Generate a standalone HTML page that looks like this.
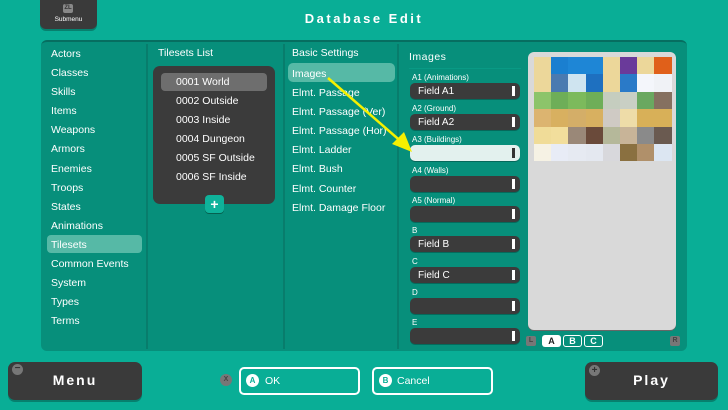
<!DOCTYPE html>
<html><head><meta charset="utf-8"><style>
*{margin:0;padding:0;box-sizing:border-box}
body{width:728px;height:410px;background:#09ae96;font-family:"Liberation Sans","DejaVu Sans",sans-serif;color:#fff;position:relative;overflow:hidden}
.a{position:absolute}
.t{font-size:10.5px;white-space:nowrap}
.panel{left:41px;top:40px;width:646px;height:311px;background:#078f7b;border-radius:6px;border-top:2px solid #066e60}
.div{width:2px;background:#087d6c;top:44px;height:305px}
.field{left:410px;width:110px;height:16px;background:#3b3b3b;border-radius:5px;box-shadow:0 1px 0 #05695b}
.field span{position:absolute;left:8px;top:3px;font-size:10px}
.field i{position:absolute;right:5px;top:3px;width:3px;height:10px;background:#fff}
.lab{left:412px;font-size:8px}
.btn{background:#3a3a3a;border-radius:7px;box-shadow:0 2px 0 #07806e}
.ob{border:2px solid #fff;border-radius:5px;height:28px}
.circ{width:13px;height:13px;border-radius:50%;background:#fff;color:#09ae96;font-size:8px;font-weight:bold;text-align:center;line-height:13px}
.tile{width:17.2px;height:17.4px;float:left}
</style></head><body>
<div class="a btn" style="left:40px;top:-6px;width:57px;height:35px;border-radius:6px"></div>
<div class="a" style="left:63px;top:4px;width:10px;height:9px;background:#888;border-radius:2px;font-size:6px;color:#333;text-align:center;line-height:9px;font-weight:bold">ZL</div>
<div class="a" style="left:40px;top:16px;width:57px;text-align:center;font-size:6.5px">Submenu</div>
<div class="a" style="left:0;width:728px;top:11px;text-align:center;font-size:13px;font-weight:bold;letter-spacing:2.5px">Database Edit</div>

<div class="a panel"></div>
<div class="a div" style="left:146px"></div>
<div class="a div" style="left:283px"></div>
<div class="a div" style="left:397px"></div>

<div class="a" style="left:47px;top:235px;width:95px;height:18px;background:#56b9a6;border-radius:4px"></div>
<div class="a t" style="left:51px;top:45px;line-height:19.1px">Actors<br>Classes<br>Skills<br>Items<br>Weapons<br>Armors<br>Enemies<br>Troops<br>States<br>Animations<br>Tilesets<br>Common Events<br>System<br>Types<br>Terms</div>

<div class="a t" style="left:158px;top:47px">Tilesets List</div>
<div class="a" style="left:153px;top:66px;width:122px;height:138px;background:#3b3b3b;border-radius:7px"></div>
<div class="a" style="left:161px;top:73px;width:106px;height:18px;background:#6e6e6e;border-radius:4px"></div>
<div class="a t" style="left:176px;top:73px;line-height:19px">0001 World<br>0002 Outside<br>0003 Inside<br>0004 Dungeon<br>0005 SF Outside<br>0006 SF Inside</div>
<div class="a" style="left:205px;top:195px;width:19px;height:18px;background:#0fb29a;border-radius:4px;box-shadow:0 1px 0 #06604f;text-align:center;font-weight:bold;font-size:14px;line-height:18px">+</div>

<div class="a t" style="left:292px;top:47px">Basic Settings</div>
<div class="a" style="left:288px;top:63px;width:107px;height:19px;background:#56b9a6;border-radius:5px"></div>
<div class="a t" style="left:292px;top:65px;line-height:19.1px">Images<br>Elmt. Passage<br>Elmt. Passage (Ver)<br>Elmt. Passage (Hor)<br>Elmt. Ladder<br>Elmt. Bush<br>Elmt. Counter<br>Elmt. Damage Floor</div>

<div class="a t" style="left:409px;top:51px;letter-spacing:.5px">Images</div>
<div class="a" style="left:409px;top:68px;width:112px;height:1px;background:#099a85"></div>
<div class="a lab" style="top:73px">A1 (Animations)</div>
<div class="a field" style="top:83px"><span>Field A1</span><i></i></div>
<div class="a lab" style="top:104px">A2 (Ground)</div>
<div class="a field" style="top:114px"><span>Field A2</span><i></i></div>
<div class="a lab" style="top:135px">A3 (Buildings)</div>
<div class="a field" style="top:145px;background:#e3f1ee"><i style="background:#333"></i></div>
<div class="a lab" style="top:166px">A4 (Walls)</div>
<div class="a field" style="top:176px"><i></i></div>
<div class="a lab" style="top:196px">A5 (Normal)</div>
<div class="a field" style="top:206px"><i></i></div>
<div class="a lab" style="top:226px">B</div>
<div class="a field" style="top:236px"><span>Field B</span><i></i></div>
<div class="a lab" style="top:257px">C</div>
<div class="a field" style="top:267px"><span>Field C</span><i></i></div>
<div class="a lab" style="top:288px">D</div>
<div class="a field" style="top:298px"><i></i></div>
<div class="a lab" style="top:318px">E</div>
<div class="a field" style="top:328px"><i></i></div>

<svg class="a" style="left:320px;top:72px" width="100" height="90"><line x1="8" y1="6" x2="84" y2="72" stroke="#f5f000" stroke-width="2.5"/><polygon points="92,80 72,72 84,60" fill="#f5f000"/></svg>

<div class="a" style="left:528px;top:52px;width:148px;height:278px;background:#d9d9d9;border-radius:6px;box-shadow:0 1px 0 #666"></div>
<div class="a" style="left:534px;top:57px;width:138px">
<div class="tile" style="background:#ecd79a"></div><div class="tile" style="background:#1a7fd0"></div><div class="tile" style="background:#1e86d6"></div><div class="tile" style="background:#1e86d6"></div><div class="tile" style="background:#ecd79a"></div><div class="tile" style="background:#6a3a9a"></div><div class="tile" style="background:#ecd79a"></div><div class="tile" style="background:#e0601a"></div>
<div class="tile" style="background:#ecd79a"></div><div class="tile" style="background:#4a7ab0"></div><div class="tile" style="background:#cfe4f0"></div><div class="tile" style="background:#1e70c0"></div><div class="tile" style="background:#ecd79a"></div><div class="tile" style="background:#2a7ac8"></div><div class="tile" style="background:#f4f6fb"></div><div class="tile" style="background:#f0f2f6"></div>
<div class="tile" style="background:#8cc46a"></div><div class="tile" style="background:#6eae58"></div><div class="tile" style="background:#7cba5c"></div><div class="tile" style="background:#6eae58"></div><div class="tile" style="background:#c5cdbf"></div><div class="tile" style="background:#c9cfc4"></div><div class="tile" style="background:#6aa860"></div><div class="tile" style="background:#857060"></div>
<div class="tile" style="background:#dcb470"></div><div class="tile" style="background:#d8b060"></div><div class="tile" style="background:#d4ae68"></div><div class="tile" style="background:#d8b060"></div><div class="tile" style="background:#cfcac4"></div><div class="tile" style="background:#eedca8"></div><div class="tile" style="background:#d8b058"></div><div class="tile" style="background:#d8b058"></div>
<div class="tile" style="background:#f0dc98"></div><div class="tile" style="background:#f2de9c"></div><div class="tile" style="background:#9a8878"></div><div class="tile" style="background:#6a4a3a"></div><div class="tile" style="background:#b5b89a"></div><div class="tile" style="background:#c8b498"></div><div class="tile" style="background:#8a8a8a"></div><div class="tile" style="background:#6a5a50"></div>
<div class="tile" style="background:#f6f2e4"></div><div class="tile" style="background:#e8ecf6"></div><div class="tile" style="background:#e6eaf2"></div><div class="tile" style="background:#e4e8f0"></div><div class="tile" style="background:#d8d8dc"></div><div class="tile" style="background:#8a7040"></div><div class="tile" style="background:#b0906a"></div><div class="tile" style="background:#dce6f2"></div>
</div>

<div class="a" style="left:526px;top:336px;width:10px;height:10px;background:#777;border-radius:2px;font-size:7px;color:#444;text-align:center;line-height:10px;font-weight:bold">L</div>
<div class="a" style="left:542px;top:335px;width:19px;height:12px;background:#fff;border-radius:3px;color:#222;font-size:9px;font-weight:bold;text-align:center;line-height:12px">A</div>
<div class="a" style="left:563px;top:335px;width:19px;height:12px;border:1px solid #fff;border-radius:3px;font-size:9px;font-weight:bold;text-align:center;line-height:10px">B</div>
<div class="a" style="left:584px;top:335px;width:19px;height:12px;border:1px solid #fff;border-radius:3px;font-size:9px;font-weight:bold;text-align:center;line-height:10px">C</div>
<div class="a" style="left:670px;top:336px;width:10px;height:10px;background:#777;border-radius:2px;font-size:7px;color:#444;text-align:center;line-height:10px;font-weight:bold">R</div>

<div class="a btn" style="left:8px;top:362px;width:134px;height:38px"></div>
<div class="a" style="left:12px;top:364px;width:11px;height:11px;border-radius:50%;background:#777;color:#333;font-size:10px;line-height:10px;text-align:center;font-weight:bold">−</div>
<div class="a" style="left:8px;top:372px;width:134px;text-align:center;font-size:14px;font-weight:bold;letter-spacing:2px">Menu</div>

<div class="a" style="left:220px;top:374px;width:12px;height:12px;border-radius:50%;background:#777;color:#444;font-size:7px;font-weight:bold;text-align:center;line-height:12px">X</div>
<div class="a ob" style="left:239px;top:367px;width:121px"></div>
<div class="a circ" style="left:246px;top:374px">A</div>
<div class="a" style="left:265px;top:375px;font-size:10.5px">OK</div>
<div class="a ob" style="left:372px;top:367px;width:121px"></div>
<div class="a circ" style="left:379px;top:374px">B</div>
<div class="a" style="left:397px;top:375px;font-size:10.5px">Cancel</div>

<div class="a btn" style="left:585px;top:362px;width:133px;height:38px"></div>
<div class="a" style="left:589px;top:365px;width:11px;height:11px;border-radius:50%;background:#777;color:#333;font-size:10px;line-height:11px;text-align:center;font-weight:bold">+</div>
<div class="a" style="left:585px;top:372px;width:133px;text-align:center;font-size:14px;font-weight:bold;letter-spacing:2px">Play</div>
</body></html>
